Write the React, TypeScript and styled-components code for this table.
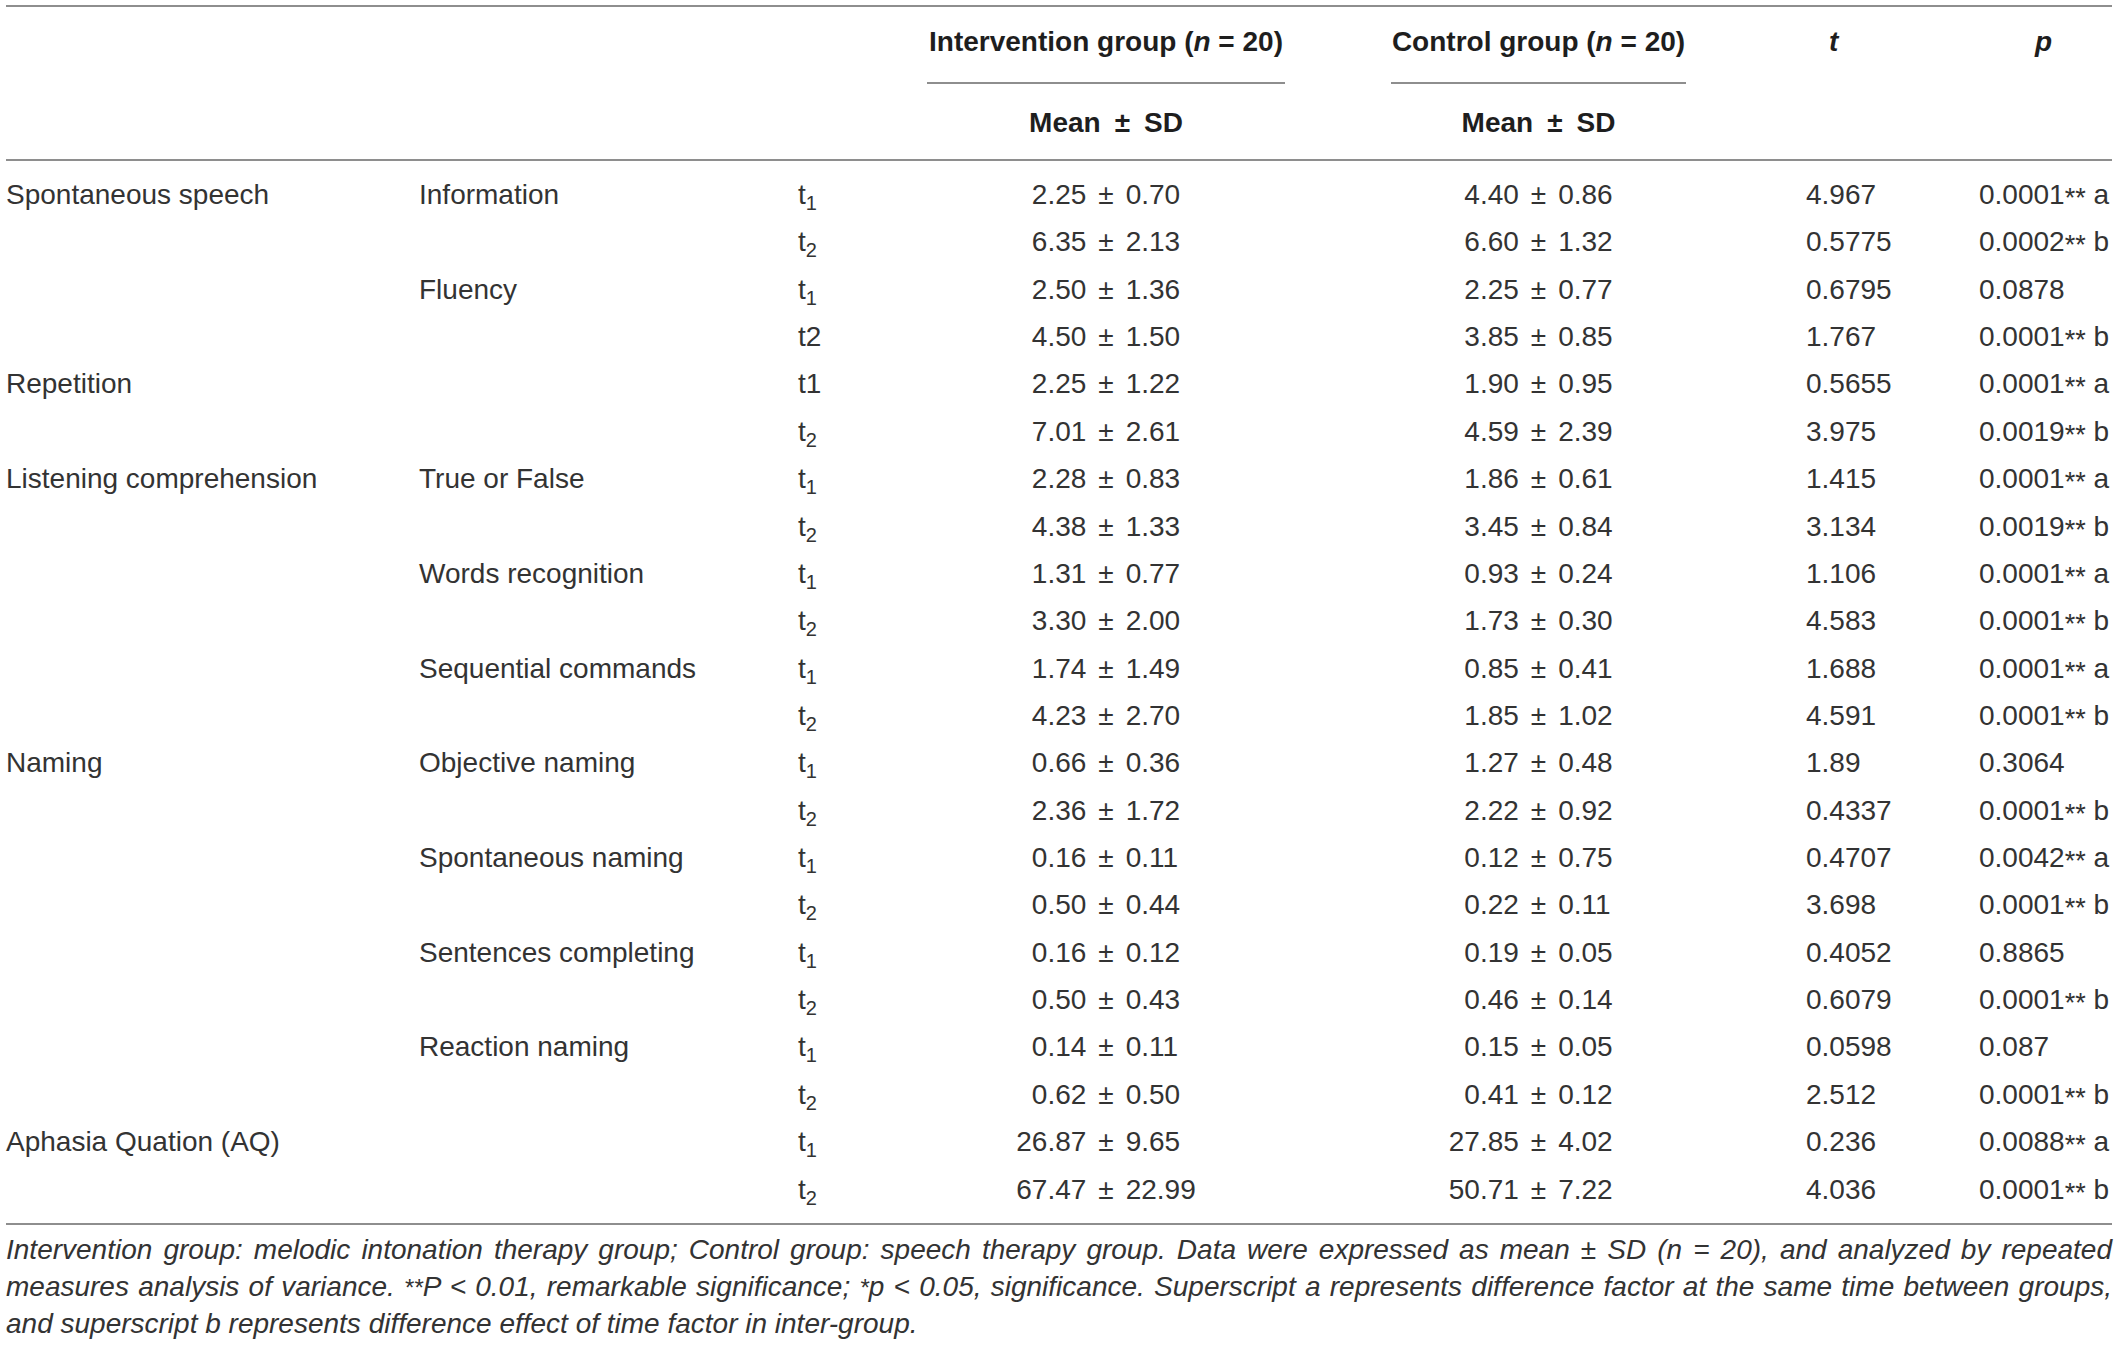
import React from 'react';
import styled, { createGlobalStyle } from 'styled-components';

const GlobalStyle = createGlobalStyle`
  html, body { margin: 0; padding: 0; background: #ffffff; }
  body {
    font-family: "Liberation Sans", Arial, Helvetica, sans-serif;
    color: #333333;
  }
`;

const TRACKS = '413px 379px 127px 362px 402px 290px 133px';

const Page = styled.div`
  width: 2106px;
  padding: 5px 0 0 6px;
`;

const Rule = styled.div`
  height: 2px;
  background: #8e8e8e;
`;

const Head = styled.div`
  display: grid;
  grid-template-columns: ${TRACKS};
  grid-template-rows: auto auto;
  row-gap: 19px;
  padding: 15px 0 16px;
  font-size: 28px;
  font-weight: bold;
  line-height: 40px;
  color: #1e1e1e;
`;

const GroupHead = styled.div<{ $col: number; $left: number; $right: number }>`
  grid-column: ${(p) => p.$col};
  grid-row: 1;
  margin: 0 ${(p) => p.$right}px 0 ${(p) => p.$left}px;
  padding-bottom: 20px;
  border-bottom: 2px solid #8e8e8e;
  text-align: center;
  white-space: nowrap;
`;

const MeanHead = styled.div<{ $col: number; $inset?: number }>`
  grid-column: ${(p) => p.$col};
  grid-row: 2;
  margin-left: ${(p) => p.$inset ?? 0}px;
  text-align: center;
  white-space: nowrap;
`;

const StatHead = styled.div<{ $col: number; $indent: number }>`
  grid-column: ${(p) => p.$col};
  grid-row: 1;
  padding-left: ${(p) => p.$indent}px;
  font-style: italic;
`;

const Ital = styled.span`
  font-style: italic;
`;

const HeadPm = styled.span`
  padding: 0 14px;
`;

const Body = styled.div`
  padding: 10px 0;
`;

const Row = styled.div`
  display: grid;
  grid-template-columns: ${TRACKS};
  font-size: 28px;
  line-height: 47.36px;
  white-space: nowrap;
`;

const Cell = styled.div<{ $indent?: number }>`
  padding-left: ${(p) => p.$indent ?? 0}px;
`;

const Sub = styled.span`
  font-size: 20px;
  line-height: 1;
  vertical-align: -6px;
`;

const Stars = styled.span`
  font-size: 27px;
  line-height: 1;
  vertical-align: -3px;
`;

const Val = styled.div<{ $inset?: number }>`
  display: grid;
  grid-template-columns: 1fr auto 1fr;
  margin-left: ${(p) => p.$inset ?? 0}px;
`;

const ValLeft = styled.span`
  justify-self: end;
`;

const ValPm = styled.span`
  padding: 0 12px;
`;

const ValRight = styled.span`
  justify-self: start;
`;

const Caption = styled.div`
  padding-top: 6px;
  font-size: 28px;
  line-height: 37px;
  font-style: italic;
  color: #333333;
`;

const CaptionLine = styled.div<{ $last?: boolean }>`
  text-align: ${(p) => (p.$last ? 'left' : 'justify')};
  text-align-last: ${(p) => (p.$last ? 'left' : 'justify')};
`;

const CapStars = styled.span`
  font-size: 24px;
  line-height: 1;
`;

type DataRow = {
  cat?: string;
  sub?: string;
  time: string;
  timeSub: boolean;
  a: [string, string];
  b: [string, string];
  t: string;
  p: string;
  sig?: string;
};

const rows: DataRow[] = [
  { cat: 'Spontaneous speech', sub: 'Information', time: '1', timeSub: true, a: ['2.25', '0.70'], b: ['4.40', '0.86'], t: '4.967', p: '0.0001', sig: 'a' },
  { time: '2', timeSub: true, a: ['6.35', '2.13'], b: ['6.60', '1.32'], t: '0.5775', p: '0.0002', sig: 'b' },
  { sub: 'Fluency', time: '1', timeSub: true, a: ['2.50', '1.36'], b: ['2.25', '0.77'], t: '0.6795', p: '0.0878' },
  { time: '2', timeSub: false, a: ['4.50', '1.50'], b: ['3.85', '0.85'], t: '1.767', p: '0.0001', sig: 'b' },
  { cat: 'Repetition', time: '1', timeSub: false, a: ['2.25', '1.22'], b: ['1.90', '0.95'], t: '0.5655', p: '0.0001', sig: 'a' },
  { time: '2', timeSub: true, a: ['7.01', '2.61'], b: ['4.59', '2.39'], t: '3.975', p: '0.0019', sig: 'b' },
  { cat: 'Listening comprehension', sub: 'True or False', time: '1', timeSub: true, a: ['2.28', '0.83'], b: ['1.86', '0.61'], t: '1.415', p: '0.0001', sig: 'a' },
  { time: '2', timeSub: true, a: ['4.38', '1.33'], b: ['3.45', '0.84'], t: '3.134', p: '0.0019', sig: 'b' },
  { sub: 'Words recognition', time: '1', timeSub: true, a: ['1.31', '0.77'], b: ['0.93', '0.24'], t: '1.106', p: '0.0001', sig: 'a' },
  { time: '2', timeSub: true, a: ['3.30', '2.00'], b: ['1.73', '0.30'], t: '4.583', p: '0.0001', sig: 'b' },
  { sub: 'Sequential commands', time: '1', timeSub: true, a: ['1.74', '1.49'], b: ['0.85', '0.41'], t: '1.688', p: '0.0001', sig: 'a' },
  { time: '2', timeSub: true, a: ['4.23', '2.70'], b: ['1.85', '1.02'], t: '4.591', p: '0.0001', sig: 'b' },
  { cat: 'Naming', sub: 'Objective naming', time: '1', timeSub: true, a: ['0.66', '0.36'], b: ['1.27', '0.48'], t: '1.89', p: '0.3064' },
  { time: '2', timeSub: true, a: ['2.36', '1.72'], b: ['2.22', '0.92'], t: '0.4337', p: '0.0001', sig: 'b' },
  { sub: 'Spontaneous naming', time: '1', timeSub: true, a: ['0.16', '0.11'], b: ['0.12', '0.75'], t: '0.4707', p: '0.0042', sig: 'a' },
  { time: '2', timeSub: true, a: ['0.50', '0.44'], b: ['0.22', '0.11'], t: '3.698', p: '0.0001', sig: 'b' },
  { sub: 'Sentences completing', time: '1', timeSub: true, a: ['0.16', '0.12'], b: ['0.19', '0.05'], t: '0.4052', p: '0.8865' },
  { time: '2', timeSub: true, a: ['0.50', '0.43'], b: ['0.46', '0.14'], t: '0.6079', p: '0.0001', sig: 'b' },
  { sub: 'Reaction naming', time: '1', timeSub: true, a: ['0.14', '0.11'], b: ['0.15', '0.05'], t: '0.0598', p: '0.087' },
  { time: '2', timeSub: true, a: ['0.62', '0.50'], b: ['0.41', '0.12'], t: '2.512', p: '0.0001', sig: 'b' },
  { cat: 'Aphasia Quation (AQ)', time: '1', timeSub: true, a: ['26.87', '9.65'], b: ['27.85', '4.02'], t: '0.236', p: '0.0088', sig: 'a' },
  { time: '2', timeSub: true, a: ['67.47', '22.99'], b: ['50.71', '7.22'], t: '4.036', p: '0.0001', sig: 'b' },
];

function MeanSd({ v, inset }: { v: [string, string]; inset?: number }) {
  return (
    <Val $inset={inset}>
      <ValLeft>{v[0]}</ValLeft>
      <ValPm>±</ValPm>
      <ValRight>{v[1]}</ValRight>
    </Val>
  );
}

export default function App() {
  return (
    <>
      <GlobalStyle />
      <Page>
        <Rule />
        <Head>
          <GroupHead $col={4} $left={2} $right={2}>
            Intervention group (<Ital>n</Ital> = 20)
          </GroupHead>
          <GroupHead $col={5} $left={104} $right={3}>
            Control group (<Ital>n</Ital> = 20)
          </GroupHead>
          <StatHead $col={6} $indent={140}>t</StatHead>
          <StatHead $col={7} $indent={56}>p</StatHead>
          <MeanHead $col={4}>
            Mean<HeadPm>±</HeadPm>SD
          </MeanHead>
          <MeanHead $col={5} $inset={101}>
            Mean<HeadPm>±</HeadPm>SD
          </MeanHead>
        </Head>
        <Rule />
        <Body>
          {rows.map((r, i) => (
            <Row key={i}>
              <Cell>{r.cat ?? ''}</Cell>
              <Cell>{r.sub ?? ''}</Cell>
              <Cell>
                t{r.timeSub ? <Sub>{r.time}</Sub> : r.time}
              </Cell>
              <MeanSd v={r.a} />
              <MeanSd v={r.b} inset={101} />
              <Cell $indent={117}>{r.t}</Cell>
              <Cell>
                {r.p}
                {r.sig ? (
                  <>
                    <Stars>**</Stars> {r.sig}
                  </>
                ) : null}
              </Cell>
            </Row>
          ))}
        </Body>
        <Rule />
        <Caption>
          <CaptionLine>
            Intervention group: melodic intonation therapy group; Control group: speech therapy group. Data were
            expressed as mean ± SD (n = 20), and analyzed by repeated
          </CaptionLine>
          <CaptionLine>
            measures analysis of variance. <CapStars>**</CapStars>P &lt; 0.01, remarkable significance;{' '}
            <CapStars>*</CapStars>p &lt; 0.05, significance. Superscript a represents difference factor at the same
            time between groups,
          </CaptionLine>
          <CaptionLine $last>
            and superscript b represents difference effect of time factor in inter-group.
          </CaptionLine>
        </Caption>
      </Page>
    </>
  );
}
